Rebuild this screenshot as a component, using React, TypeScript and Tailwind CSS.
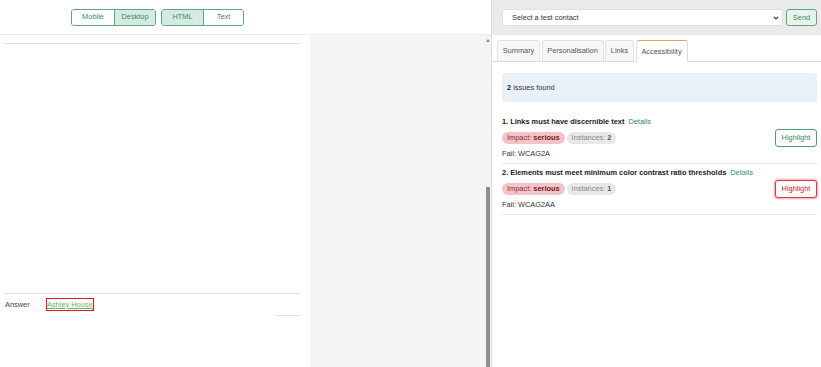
import React from "react";

function Issue({ n, title, instances, fail, red }: { n: number; title: string; instances: number; fail: string; red?: boolean }) {
  return (
    <div className="flex flex-col">
      <div className="mt-[4px] flex h-[10px] items-center">
        <span className="font-bold text-[#222]">{n}. {title}</span>
        <span className="ml-[4px] text-[#2f8f5b]">Details</span>
      </div>
      <div className="mt-[2px] flex h-[18px] items-center">
        <span className="flex h-[12px] items-center rounded-full bg-[#f3c4c7] px-[5px] text-[#8a2a32]">
          Impact:&nbsp;<b className="text-[#7a1620]">serious</b>
        </span>
        <span className="ml-[2px] flex h-[12px] items-center rounded-full bg-[#e8e8e8] px-[5px] text-[#888]">
          Instances:&nbsp;<b className="text-[#555]">{instances}</b>
        </span>
        <div className="flex-1" />
        {red ? (
          <span className="flex h-[18px] w-[42px] items-center justify-center rounded-[3px] border border-[#d9363e] bg-white text-[#c4222b] shadow-[0_0_0_1.5px_rgba(220,53,69,0.3)]">
            Highlight
          </span>
        ) : (
          <span className="flex h-[18px] w-[42px] items-center justify-center rounded-[3px] border border-[#4e9f77] bg-white text-[#3a8a62]">
            Highlight
          </span>
        )}
      </div>
      <div className="mt-[2px] flex h-[10px] items-center text-[#333]">Fail: {fail}</div>
      <div className="mt-[4px] border-b border-[#e6e6e6]" />
    </div>
  );
}

export default function App() {
  return (
    <div className="flex h-[367px] w-[821px] overflow-hidden bg-white font-['Liberation_Sans',Arial,sans-serif] text-[7.4px] leading-none">
      {/* Left pane */}
      <div className="flex w-[491px] flex-col">
        <div className="flex h-[35px] items-center border-b border-[#ececec] pl-[71px] shadow-[0_1px_2px_rgba(0,0,0,0.04)]">
          <div className="flex h-[17px] overflow-hidden rounded-[3px] border border-[#5aa882] text-[#3b8a63]">
            <span className="flex w-[42px] items-center justify-center bg-white">Mobile</span>
            <span className="flex w-[41px] items-center justify-center border-l border-[#5aa882] bg-[#d6ebe0]">Desktop</span>
          </div>
          <div className="ml-[5px] flex h-[17px] overflow-hidden rounded-[3px] border border-[#5aa882] text-[#3b8a63]">
            <span className="flex w-[41px] items-center justify-center bg-[#d6ebe0]">HTML</span>
            <span className="flex w-[40px] items-center justify-center border-l border-[#5aa882] bg-white">Text</span>
          </div>
        </div>
        <div className="flex flex-1">
          <div className="flex w-[310px] flex-col bg-white">
            <div className="h-[8px]" />
            <div className="ml-[5px] w-[294px] border-t border-[#dedede]" />
            <div className="h-[249px]" />
            <div className="ml-[5px] w-[294px] border-t border-[#dedede]" />
            <div className="mt-[4px] flex h-[13px] items-center pl-[5px]">
              <span className="w-[41px] text-[#444]">Answer</span>
              <span className="flex h-[13px] items-center whitespace-nowrap border border-[#e8141c] text-[#5cb85c] underline">Ashley House</span>
            </div>
            <div className="ml-[277px] mt-[4px] w-[22px] border-t border-[#e2e2e2]" />
          </div>
          <div className="flex-1 bg-[#f5f5f5]" />
          <div className="flex w-[7px] flex-col bg-[#f4f4f4]">
            <div className="flex h-[10px] items-center justify-center">
              <div className="h-0 w-0 border-x-[2.5px] border-b-[3px] border-x-transparent border-b-[#8a8a8a]" />
            </div>
            <div className="h-[142px]" />
            <div className="ml-[2px] w-[4px] flex-1 bg-[#8f8f8f]" />
          </div>
        </div>
      </div>

      {/* Right pane */}
      <div className="flex w-[330px] flex-col border-l border-[#dcdcdc]">
        <div className="flex h-[35px] items-center bg-[#ebebeb] pl-[10px] pr-[4px]">
          <div className="flex h-[17px] w-[281px] items-center justify-between rounded-[3px] border border-[#e0e0e0] bg-white pl-[9px] pr-[3px] text-[#333]">
            <span>Select a test contact</span>
            <svg width="6" height="4" viewBox="0 0 6 4"><path d="M0.8 0.8 L3 3 L5.2 0.8" fill="none" stroke="#333" strokeWidth="1.1" /></svg>
          </div>
          <span className="ml-[3px] flex h-[17px] w-[31px] items-center justify-center rounded-[3px] border border-[#5aa882] bg-[#e9f3ec] text-[#3b8a63]">Send</span>
        </div>
        <div className="mt-[6px] flex h-[21px] items-end border-b border-[#dddddd] pl-[5px] text-[#555]">
          <span className="flex h-[21px] w-[43px] items-center justify-center rounded-t-[3px] border border-b-0 border-[#e2e2e2] bg-[#f7f7f7]">Summary</span>
          <span className="ml-[1.5px] flex h-[21px] w-[62px] items-center justify-center rounded-t-[3px] border border-b-0 border-[#e2e2e2] bg-[#f7f7f7]">Personalisation</span>
          <span className="ml-[1.5px] flex h-[21px] w-[29px] items-center justify-center rounded-t-[3px] border border-b-0 border-[#e2e2e2] bg-[#f7f7f7]">Links</span>
          <span className="relative -mb-px ml-[1.5px] flex h-[22px] w-[52px] items-center justify-center rounded-t-[3px] border border-b-0 border-[#dddddd] border-t-[#f0a24a] bg-white">Accessibility</span>
        </div>
        <div className="flex flex-col pl-[10px] pr-[4px]">
          <div className="mt-[11px] flex h-[29px] items-center rounded-[3px] bg-[#e9f0f8] pl-[5px] text-[#333]">
            <b className="text-[#222]">2</b>&nbsp;issues found
          </div>
          <div className="h-[11px]" />
          <Issue n={1} title="Links must have discernible text" instances={2} fail="WCAG2A" />
          <Issue n={2} title="Elements must meet minimum color contrast ratio thresholds" instances={1} fail="WCAG2AA" red />
        </div>
      </div>
    </div>
  );
}
